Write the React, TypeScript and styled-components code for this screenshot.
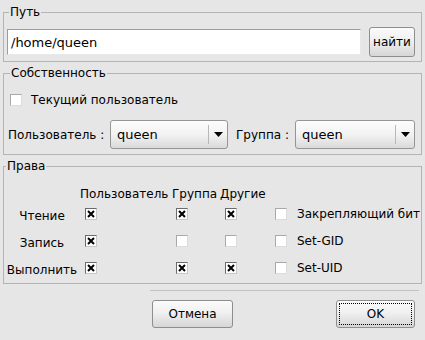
import styled, { createGlobalStyle } from "styled-components";

const GlobalStyle = createGlobalStyle`
  html, body {
    margin: 0;
    padding: 0;
    background: #e6e6e6;
  }
  body {
    font-family: "DejaVu Sans", "Liberation Sans", sans-serif;
    font-size: 12px;
    color: #000;
  }
`;

const Dialog = styled.div`
  width: 425px;
  height: 340px;
  box-sizing: border-box;
  padding: 5px 3px 0 3px;
  display: flex;
  flex-direction: column;
  gap: 4px;
`;

const Group = styled.fieldset<{ $pad: string }>`
  margin: 0;
  min-width: 0;
  border: 1px solid #b4b4b4;
  padding: ${(p) => p.$pad};
`;

const Legend = styled.legend`
  padding: 0 1px;
  margin-left: 2px;
  line-height: 14px;
`;

const PathRow = styled.div`
  display: flex;
  align-items: center;
  gap: 8px;
`;

const TextInput = styled.div`
  flex: 1;
  height: 26px;
  box-sizing: border-box;
  background: #fff;
  border: 1px solid;
  border-color: #9c9c9c #e8e8e8 #e8e8e8 #9c9c9c;
  display: flex;
  align-items: center;
  padding-left: 3px;
  font-size: 13px;
`;

const Button = styled.button<{ $w: number; $h: number; $focus?: boolean }>`
  position: relative;
  flex: none;
  width: ${(p) => p.$w}px;
  height: ${(p) => p.$h}px;
  padding: 0;
  font-family: inherit;
  font-size: 12px;
  font-weight: normal;
  color: #000;
  border: 1px solid #8e8e8e;
  border-radius: 3px;
  background: linear-gradient(#fbfbfb, #f0f0f0 45%, #d6d6d6);
  &::after {
    content: "";
    display: ${(p) => (p.$focus ? "block" : "none")};
    position: absolute;
    inset: 2px;
    border: 1px dotted #000;
  }
`;

const CheckRow = styled.label`
  display: flex;
  align-items: center;
  gap: 9px;
  height: 16px;
  padding-left: 2px;
`;

const Box = styled.span<{ $on?: boolean }>`
  width: 12px;
  height: 12px;
  box-sizing: border-box;
  background: #fff;
  border: 1px solid;
  border-color: ${(p) =>
    p.$on ? "#6a6a6a #c8c8c8 #c8c8c8 #6a6a6a" : "#a8a8a8 #dcdcdc #dcdcdc #a8a8a8"};
  display: inline-flex;
  align-items: center;
  justify-content: center;
  flex: none;
`;

const OwnerRow = styled.div`
  display: flex;
  align-items: center;
  margin-top: 12px;
`;

const FieldLabel = styled.span<{ $w: number }>`
  flex: none;
  width: ${(p) => p.$w}px;
  white-space: nowrap;
`;

const Combo = styled.div<{ $w: number }>`
  flex: none;
  width: ${(p) => p.$w}px;
  height: 29px;
  box-sizing: border-box;
  border: 1px solid #959595;
  border-radius: 3px;
  background: linear-gradient(#fdfdfd, #f2f2f2 50%, #dadada);
  display: flex;
  align-items: center;
  margin-right: 8px;
  font-size: 13px;
`;

const ComboText = styled.span`
  flex: 1;
  padding-left: 6px;
`;

const ComboArrow = styled.span`
  width: 18px;
  height: 19px;
  border-left: 1px solid #b8b8b8;
  display: flex;
  align-items: center;
  justify-content: center;
`;

const Grid = styled.div`
  display: grid;
  grid-template-columns: 76px 92px 48px 50px 1fr;
  grid-template-rows: 13px 27px 27px 27px;
  align-items: center;
`;

const Head = styled.span`
  white-space: nowrap;
`;

const RowLabel = styled.span`
  text-align: center;
  padding-top: 4px;
`;

const Cell = styled.span<{ $indent: number }>`
  display: flex;
  align-items: center;
  gap: 10px;
  white-space: nowrap;
  padding-left: ${(p) => p.$indent}px;
`;

const Footer = styled.div`
  margin: 2px 3px 0 147px;
  border-top: 1px solid #c2c2c2;
  padding: 9px 4px 0 2px;
  display: flex;
  justify-content: space-between;
`;

const Mark = () => (
  <svg width="8" height="8" viewBox="0 0 8 8">
    <path d="M1 1 L7 7 M7 1 L1 7" stroke="#000" strokeWidth="2" />
  </svg>
);

const Arrow = () => (
  <svg width="9" height="5" viewBox="0 0 9 5">
    <path d="M0 0 H9 L4.5 5 Z" fill="#000" />
  </svg>
);

const Check = ({ on }: { on?: boolean }) => <Box $on={on}>{on && <Mark />}</Box>;

const rows = [
  { label: "Чтение", u: true, g: true, o: true, extra: "Закрепляющий бит" },
  { label: "Запись", u: true, g: false, o: false, extra: "Set-GID" },
  { label: "Выполнить", u: true, g: true, o: true, extra: "Set-UID" },
];

export default function App() {
  return (
    <>
      <GlobalStyle />
      <Dialog>
        <Group $pad="8px 6px 4px 3px">
          <Legend>Путь</Legend>
          <PathRow>
            <TextInput>/home/queen</TextInput>
            <Button $w={46} $h={30}>найти</Button>
          </PathRow>
        </Group>

        <Group $pad="12px 6px 5px 4px">
          <Legend>Собственность</Legend>
          <CheckRow>
            <Check />
            Текущий пользователь
          </CheckRow>
          <OwnerRow>
            <FieldLabel $w={102}>Пользователь :</FieldLabel>
            <Combo $w={118}>
              <ComboText>queen</ComboText>
              <ComboArrow><Arrow /></ComboArrow>
            </Combo>
            <FieldLabel $w={59}>Группа :</FieldLabel>
            <Combo $w={120}>
              <ComboText>queen</ComboText>
              <ComboArrow><Arrow /></ComboArrow>
            </Combo>
          </OwnerRow>
        </Group>

        <Group $pad="14px 0 2px 0">
          <Legend>Права</Legend>
          <Grid>
            <span />
            <Head>Пользователь</Head>
            <Head>Группа</Head>
            <Head>Другие</Head>
            <span />
            {rows.map((r) => (
              <>
                <RowLabel key={r.label}>{r.label}</RowLabel>
                <Cell $indent={5}><Check on={r.u} /></Cell>
                <Cell $indent={4}><Check on={r.g} /></Cell>
                <Cell $indent={5}><Check on={r.o} /></Cell>
                <Cell $indent={5}><Check />{r.extra}</Cell>
              </>
            ))}
          </Grid>
        </Group>

        <Footer>
          <Button $w={81} $h={28}>Отмена</Button>
          <Button $w={79} $h={28} $focus>OK</Button>
        </Footer>
      </Dialog>
    </>
  );
}
